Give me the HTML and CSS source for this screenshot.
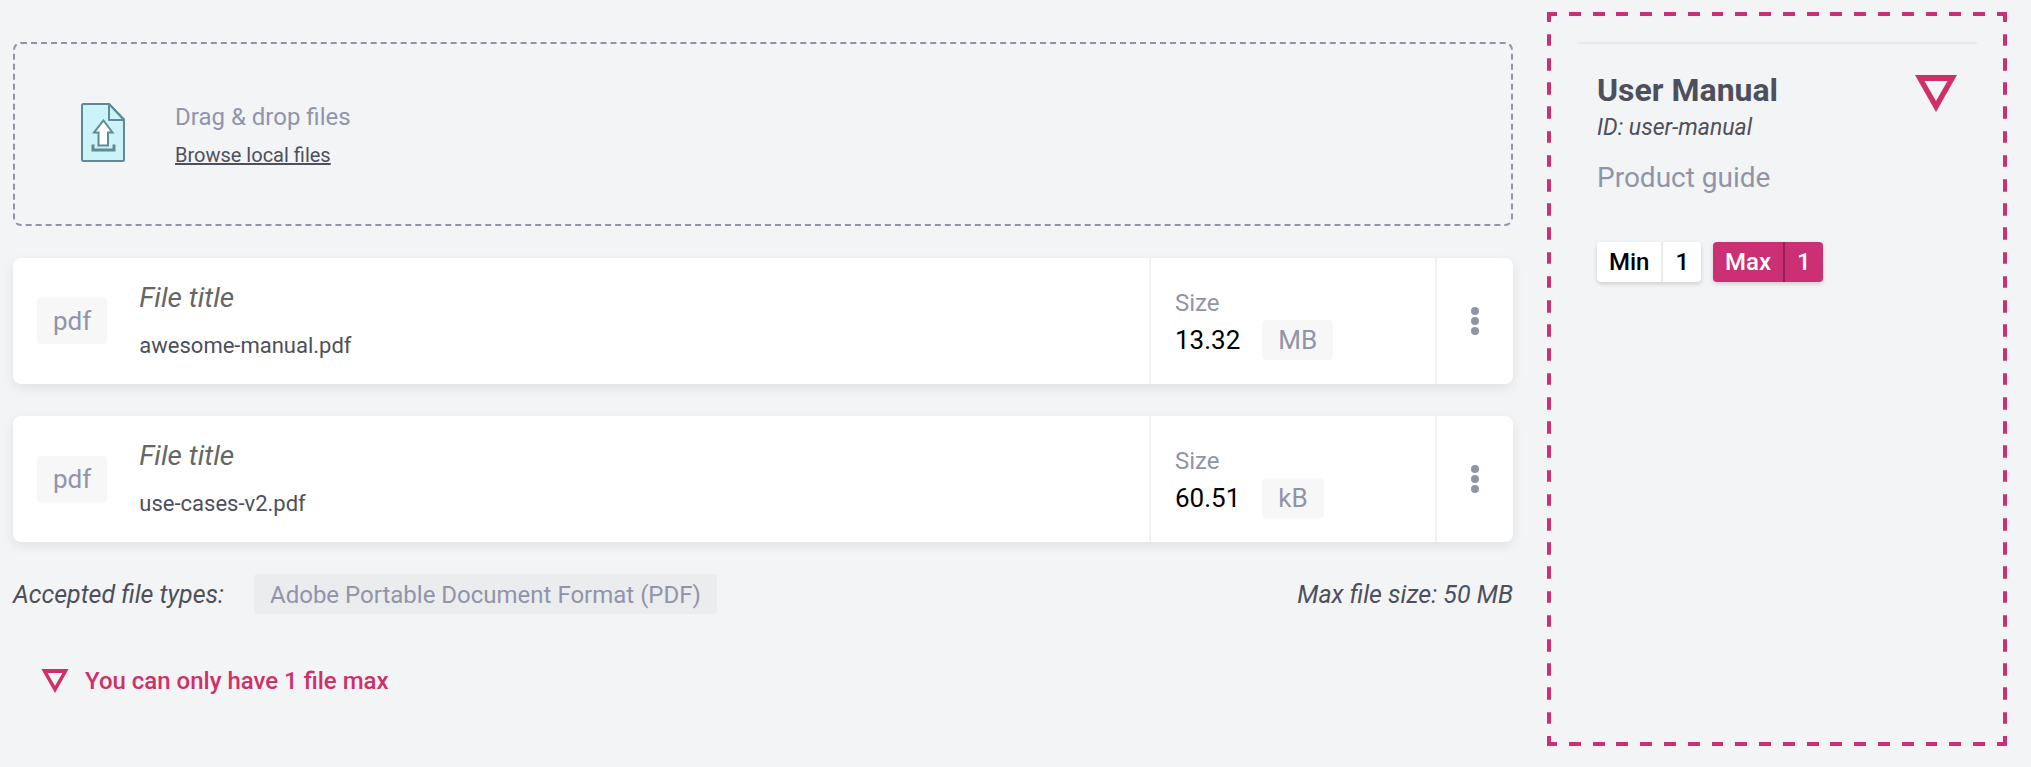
FILE: index.html
```html
<!DOCTYPE html>
<html lang="en">
<head>
<meta charset="utf-8">
<meta name="viewport" content="width=device-width, initial-scale=1">
<title>User Manual</title>
<link rel="stylesheet" href="styles.css">
</head>
<body>
<div class="page">
  <main class="files">
    <section class="dropzone">
      <svg class="upload-icon" viewBox="0 0 44 59" aria-hidden="true">
        <g stroke="#5f8a96" stroke-width="2" stroke-linejoin="round">
          <path fill="#ccf4f8" d="M2.500 1H28L43 16.500V56.500Q43 58 41.500 58H2.500Q1 58 1 56.500V2.500Q1 1 2.500 1Z"/>
          <path fill="#ccf4f8" d="M28 1V17H43Z"/>
          <path fill="#fff" stroke-linejoin="miter" d="M22.500 17.500L31.500 29.500H27V42.500H17.500V29.500H13Z"/>
        </g>
        <path fill="none" stroke="#5f8a96" stroke-width="3" d="M12 41.500V47H33V41.500"/>
      </svg>
      <div class="dropzone-text">
        <p class="drop-label">Drag &amp; drop files</p>
        <button class="browse" type="button">Browse local files</button>
      </div>
    </section>

    <ul class="file-list">
      <li class="card">
        <div class="card-main">
          <span class="tag tag-ext">pdf</span>
          <div class="card-names">
            <input class="title-input" type="text" placeholder="File title" aria-label="File title for awesome-manual.pdf">
            <span class="filename">awesome-manual.pdf</span>
          </div>
        </div>
        <div class="card-size">
          <span class="size-label">Size</span>
          <div class="size-row"><span>13.32</span><span class="tag">MB</span></div>
        </div>
        <button class="menu" type="button" aria-label="File options">
          <svg class="dots" viewBox="0 0 8 28" fill="#9194a8"><circle cx="4" cy="4" r="4"/><circle cx="4" cy="14" r="4"/><circle cx="4" cy="24" r="4"/></svg>
        </button>
      </li>
      <li class="card">
        <div class="card-main">
          <span class="tag tag-ext">pdf</span>
          <div class="card-names">
            <input class="title-input" type="text" placeholder="File title" aria-label="File title for use-cases-v2.pdf">
            <span class="filename">use-cases-v2.pdf</span>
          </div>
        </div>
        <div class="card-size">
          <span class="size-label">Size</span>
          <div class="size-row"><span>60.51</span><span class="tag">kB</span></div>
        </div>
        <button class="menu" type="button" aria-label="File options">
          <svg class="dots" viewBox="0 0 8 28" fill="#9194a8"><circle cx="4" cy="4" r="4"/><circle cx="4" cy="14" r="4"/><circle cx="4" cy="24" r="4"/></svg>
        </button>
      </li>
    </ul>

    <div class="rules">
      <span class="note">Accepted file types:</span>
      <span class="type-chip">Adobe Portable Document Format (PDF)</span>
      <span class="note max-size">Max file size: 50 MB</span>
    </div>

    <p class="alert" role="alert">
      <svg class="alert-icon" viewBox="0 0 42 37" aria-hidden="true"><path fill="#cf3068" fill-rule="evenodd" d="M0 0H42L21 37ZM9.500 6L21 26L32.500 6Z"/></svg>
      <span>You can only have 1 file max</span>
    </p>
  </main>

  <aside class="panel">
    <div class="panel-body">
      <div class="panel-head">
        <h1 class="panel-title">User Manual</h1>
        <svg class="panel-icon" viewBox="0 0 42 37" role="img" aria-label="Invalid"><path fill="#cf3068" fill-rule="evenodd" d="M0 0H42L21 37ZM9.500 6L21 26L32.500 6Z"/></svg>
      </div>
      <p class="panel-id">ID: user-manual</p>
      <p class="panel-desc">Product guide</p>
      <div class="limits">
        <div class="limit"><span class="limit-name">Min</span><span class="limit-value">1</span></div>
        <div class="limit limit-invalid"><span class="limit-name">Max</span><span class="limit-value">1</span></div>
      </div>
    </div>
  </aside>
</div>
</body>
</html>
```

FILE: styles.css
```css
:root {
  --bg: #f3f4f6;
  --muted: #9194a8;
  --dark: #4d4f5c;
  --pink: #cb3074;
  --error: #cf3068;
  --line: #f1f1f2;
}

* { box-sizing: border-box; }

body {
  margin: 0;
  background: var(--bg);
  color: var(--dark);
  font-family: Roboto, "Liberation Sans", sans-serif;
  font-size: 24px;
  line-height: 28px;
}

p, h1, ul { margin: 0; padding: 0; }

button, input {
  border: 0;
  padding: 0;
  background: none;
  font: inherit;
  color: inherit;
}

.page {
  display: flex;
  gap: 34px;
  min-height: 100vh;
  padding: 12px 24px 21px 13px;
}

.files {
  flex: 1;
  min-width: 0;
  padding-top: 30px;
}

.dropzone {
  display: flex;
  align-items: flex-start;
  gap: 50px;
  padding: 59px 66px 55px;
  border: 2px dashed var(--muted);
  border-radius: 8px;
}

.upload-icon { width: 44px; height: 59px; }

.dropzone-text {
  display: flex;
  flex-direction: column;
  align-items: flex-start;
  gap: 10px;
}

.drop-label { color: var(--muted); }

.browse {
  font-size: 20px;
  line-height: 28px;
  height: 28px;
  text-decoration: underline;
  cursor: pointer;
}

.file-list {
  display: grid;
  gap: 32px;
  margin-top: 32px;
  list-style: none;
}

.card {
  display: flex;
  min-height: 126px;
  border-radius: 8px;
  background: #fff;
  box-shadow: 0 4px 12px rgba(0, 0, 0, 0.08);
}

.card-main {
  display: flex;
  flex: 1;
  align-items: center;
  gap: 32px;
  min-width: 0;
  padding: 0 24px;
}

.tag {
  padding: 4px 16px;
  border-radius: 4px;
  background: #f7f7f8;
  color: var(--muted);
  font-size: 26px;
  line-height: 32px;
}

.tag-ext { padding: 7px 16px; }

.card-names {
  display: flex;
  flex: 1;
  flex-direction: column;
  gap: 18px;
  min-width: 0;
}

.title-input {
  width: 100%;
  height: 32px;
  font-size: 28px;
  line-height: 32px;
  font-style: italic;
}

.title-input::placeholder { color: #666; opacity: 1; }

.filename { font-size: 22px; }

.card-size {
  width: 286px;
  padding: 31px 24px 24px;
  border-left: 2px solid var(--line);
}

.size-label {
  display: block;
  margin-bottom: 3px;
  color: var(--muted);
}

.size-row {
  display: flex;
  align-items: center;
  gap: 22px;
  color: #000;
  font-size: 26px;
}

.menu {
  display: grid;
  place-items: center;
  width: 78px;
  border-left: 2px solid var(--line);
  cursor: pointer;
}

.dots { width: 8px; height: 28px; }

.rules {
  display: flex;
  align-items: baseline;
  gap: 30px;
  margin-top: 32px;
}

.note {
  font-size: 25px;
  font-style: italic;
}

.type-chip {
  padding: 7px 16px 5px;
  border-radius: 4px;
  background: #ebecee;
  color: var(--muted);
}

.max-size { margin-left: auto; }

.alert {
  display: flex;
  align-items: center;
  gap: 16px;
  margin-top: 53px;
  padding-left: 28px;
  color: var(--error);
  font-weight: 500;
}

.alert-icon { width: 28px; height: 24px; }

.panel {
  width: 460px;
  padding: 26px;
  border: 4px dashed var(--pink);
  border-image: url("data:image/svg+xml,%3Csvg xmlns='http://www.w3.org/2000/svg' width='56' height='56'%3E%3Cpath fill='%23cb3074' d='M0 0h10v4H4v6H0zM46 0h10v10h-4V4h-6zM0 46h4v6h6v4H0zM52 46h4v10H46v-4h6zM22 0h12v4H22zM22 52h12v4H22zM0 22h4v12H0zM52 22h4v12h-4z'/%3E%3C/svg%3E") 16 / 16px round;
}

.panel-body {
  padding: 27px 20px;
  border-top: 2px solid #e8e9eb;
}

.panel-head {
  display: flex;
  justify-content: space-between;
  min-height: 41px;
}

.panel-title {
  font-size: 32px;
  line-height: 38px;
  font-weight: 700;
}

.panel-icon {
  align-self: flex-end;
  width: 42px;
  height: 37px;
}

.panel-id {
  margin-top: 2px;
  font-size: 23px;
  font-style: italic;
}

.panel-desc {
  margin-top: 20px;
  color: var(--muted);
  font-size: 28px;
  line-height: 32px;
}

.limits {
  display: flex;
  gap: 12px;
  margin-top: 48px;
}

.limit {
  display: flex;
  border-radius: 4px;
  background: #fff;
  color: #000;
  font-weight: 500;
  box-shadow: 0 2px 4px rgba(0, 0, 0, 0.16);
}

.limit-name { padding: 6px 12px; }

.limit-value {
  padding: 6px 12px;
  border-left: 2px solid #ebebec;
}

.limit-invalid { background: var(--pink); color: #fff; }

.limit-invalid .limit-value { border-left-color: #942355; }
```
